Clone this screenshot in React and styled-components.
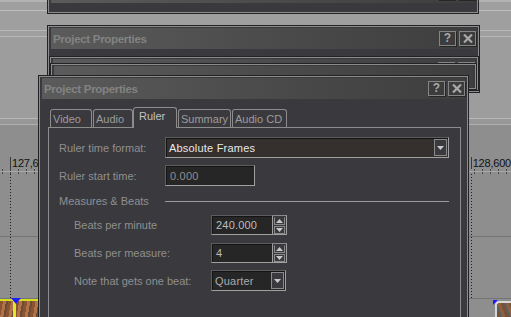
import React from 'react';
import styled, { createGlobalStyle, css } from 'styled-components';

const Global = createGlobalStyle`
  html, body { margin: 0; padding: 0; background: #8e8e8e; overflow: hidden; }
  body { font-family: "Liberation Sans", Arial, sans-serif; }
  * { box-sizing: border-box; }
`;

const Stage = styled.div`
  position: relative;
  width: 511px;
  height: 317px;
  overflow: hidden;
  background: #8e8e8e;
`;

/* ---------- timeline background ---------- */
const Lanes = styled.div`
  display: flex;
  flex-direction: column;
  height: 100%;
`;
const Lane = styled.div`
  flex: 0 0 ${p => p.$h}px;
  background: ${p => p.$bg || 'transparent'};
  border-bottom: ${p => (p.$line ? `1px solid ${p.$line}` : 'none')};
`;
const dots = `repeating-linear-gradient(to bottom, #1c1c1c 0 1px, transparent 1px 3px)`;
const Track = styled(Lane)`
  background-image: ${dots}, ${dots};
  background-size: 1px 100%, 1px 100%;
  background-position: 10px 0, 471px 0;
  background-repeat: no-repeat;
`;
const RulerRow = styled.div`
  flex: 0 0 44px;
  display: flex;
  align-items: flex-end;
  justify-content: space-between;
  padding-left: 10px;
`;
const RulerLabel = styled.div`
  border-left: 1px solid #3a3a3a;
  padding-left: 1px;
  font-size: 11px;
  line-height: 12px;
  color: #111;
  white-space: nowrap;
  letter-spacing: -0.2px;
`;
const Ticks = styled.div`
  flex: 0 0 5px;
  background:
    linear-gradient(#aaaaaa, #aaaaaa) 0 2px / 100% 1px no-repeat,
    repeating-linear-gradient(90deg, #4a4a4a 0 1px, transparent 1px 8px);
  background-position: 0 2px, 2px 0;
`;
const ClipRow = styled.div`
  flex: 1;
  display: flex;
  justify-content: space-between;
`;
const ClipLeft = styled.div`
  position: relative;
  width: 40px;
  border-top: 2px solid #d6df1e;
  background:
    linear-gradient(90deg, transparent 13px, #e3e82a 13px 15px, #cfcfcf 15px 16px, transparent 16px),
    repeating-linear-gradient(100deg, #8a5432 0 3px, #b07448 3px 6px, #6d4a34 6px 8px);
`;
const ClipRight = styled.div`
  position: relative;
  width: 16px;
  margin-top: 2px;
  border-top: 2px solid #d8d8d8;
  border-left: 2px solid #d8d8d8;
  border-top-left-radius: 4px;
  background: repeating-linear-gradient(70deg, #7a5036 0 3px, #5a6060 3px 5px, #8c6040 5px 8px);
`;
const Marker = styled.svg`
  position: absolute;
  top: -3px;
  left: ${p => p.$x}px;
`;

/* ---------- windows ---------- */
const Win = styled.div`
  position: absolute;
  left: ${p => p.$x}px;
  top: ${p => p.$y}px;
  width: ${p => p.$w}px;
  height: ${p => p.$h}px;
  z-index: ${p => p.$z};
  background: #3a393e;
  border: 1px solid #222225;
  box-shadow: inset 0 0 0 1px #8c8c8c;
  padding: 2px 3px 0 3px;
  display: flex;
  flex-direction: column;
  overflow: hidden;
`;
const TitleBar = styled.div`
  flex: 0 0 21px;
  display: flex;
  align-items: center;
  justify-content: space-between;
  padding: 0 0 0 2px;
  background: linear-gradient(90deg, #5b5b5b 0%, #4a4a4a 55%, #3e3e3e 100%);
`;
const Title = styled.div`
  font-weight: bold;
  font-size: 11.5px;
  letter-spacing: -0.3px;
  color: #838383;
  white-space: nowrap;
  visibility: ${p => (p.$hidden ? 'hidden' : 'visible')};
`;
const Btns = styled.div`
  display: flex;
  gap: 3px;
  visibility: ${p => (p.$hidden ? 'hidden' : 'visible')};
`;
const TBtn = styled.div`
  width: 17px;
  height: 15px;
  border: 1px solid #858585;
  box-shadow: 1px 1px 0 #262626;
  background: #3c3c3c;
  color: #a8a8a8;
  font-weight: bold;
  font-size: 12px;
  line-height: 13px;
  display: flex;
  align-items: center;
  justify-content: center;
`;

const Body = styled.div`
  flex: 1;
  display: flex;
  flex-direction: column;
  padding: 8px 4px 0 6px;
`;
const TabRow = styled.div`
  display: flex;
  align-items: flex-end;
  padding-left: 2px;
  height: 20px;
`;
const Tab = styled.div`
  width: ${p => p.$w}px;
  margin-left: ${p => p.$ml || 0}px;
  height: 18px;
  border: 1px solid #8c8c8c;
  border-bottom: none;
  border-radius: 3px 3px 0 0;
  padding-left: 2px;
  font-size: 11px;
  line-height: 18px;
  color: #9c9c9c;
  white-space: nowrap;
  ${p => p.$active && css`
    position: relative;
    z-index: 1;
    height: 21px;
    margin-bottom: -1px;
    padding-left: 5px;
    line-height: 17px;
    background: #3a393e;
    color: #c2c2c2;
  `}
`;
const Panel = styled.div`
  flex: 1;
  border: 1px solid #8c8c8c;
  border-bottom: none;
  padding: 9px 0 0 10px;
  display: flex;
  flex-direction: column;
`;
const Row = styled.div`
  display: flex;
  align-items: center;
  height: ${p => p.$h}px;
  margin-top: ${p => p.$mt}px;
  padding-left: ${p => p.$indent || 0}px;
`;
const Label = styled.div`
  width: ${p => p.$w}px;
  flex: none;
  font-size: 11px;
  color: #8f8f8f;
  white-space: nowrap;
`;
const Rule = styled.div`
  flex: 1;
  height: 1px;
  background: #9a9a9a;
  margin-right: 11px;
`;
const Sunken = styled.div`
  width: ${p => p.$w}px;
  height: 100%;
  display: flex;
  align-items: stretch;
  border: 1px solid;
  border-color: #5c5c5c #a0a0a0 #a0a0a0 #5c5c5c;
  box-shadow: inset 1px 1px 0 #141414;
  background: ${p => p.$bg || '#262626'};
  padding: 1px;
`;
const Value = styled.div`
  flex: 1;
  display: flex;
  align-items: center;
  padding-left: ${p => p.$pl || 3}px;
  font-size: 11px;
  color: ${p => p.$c || '#bdbdbd'};
  white-space: nowrap;
  letter-spacing: 0.2px;
`;
const DropBtn = styled.div`
  width: 13px;
  border: 1px solid #8a8a8a;
  background: #3a393e;
  display: flex;
  align-items: center;
  justify-content: center;
`;
const SpinWrap = styled.div`
  display: flex;
  height: 100%;
`;
const SpinCol = styled.div`
  width: 14px;
  display: flex;
  flex-direction: column;
  gap: 1px;
  border-right: 1px solid #a0a0a0;
  border-bottom: 1px solid #a0a0a0;
  border-top: 1px solid #8a8a8a;
  padding: 1px 1px 0 1px;
`;
const SpinBtn = styled.div`
  flex: 1;
  border: 1px solid #8a8a8a;
  border-top-color: ${p => (p.$down ? '#8a8a8a' : '#3a393e')};
  background: #3a393e;
  display: flex;
  align-items: center;
  justify-content: center;
`;

const Down = ({ c = '#c8c8c8' }) => (
  <svg width="7" height="4" viewBox="0 0 7 4"><path d="M0 0h7L3.5 4z" fill={c} /></svg>
);
const Up = ({ c = '#c8c8c8' }) => (
  <svg width="7" height="4" viewBox="0 0 7 4"><path d="M0 4h7L3.5 0z" fill={c} /></svg>
);
const CloseIcon = () => (
  <svg width="10" height="9" viewBox="0 0 10 9">
    <path d="M1 0.5l8 8M9 0.5l-8 8" stroke="#a8a8a8" strokeWidth="2.2" />
  </svg>
);

const WindowFrame = ({ x, y, w, h, z, noTitle, noButtons, children }) => (
  <Win $x={x} $y={y} $w={w} $h={h} $z={z}>
    <TitleBar>
      <Title $hidden={noTitle}>Project Properties</Title>
      <Btns $hidden={noButtons}>
        <TBtn>?</TBtn>
        <TBtn><CloseIcon /></TBtn>
      </Btns>
    </TitleBar>
    {children}
  </Win>
);

const tabs = [
  { t: 'Video', w: 42 },
  { t: 'Audio', w: 40, ml: 1 },
  { t: 'Ruler', w: 44, active: true },
  { t: 'Summary', w: 53, ml: 1 },
  { t: 'Audio CD', w: 55, ml: 1 },
];

export default function App() {
  return (
    <>
      <Global />
      <Stage>
        <Lanes>
          <Lane $h={2} $bg="#b2b2b2" />
          <Lane $h={9} $bg="#9f9f9f" $line="#bcbcbc" />
          <Lane $h={20} $bg="#9f9f9f" $line="#b8b8b8" />
          <Lane $h={6} $bg="#9f9f9f" $line="#b8b8b8" />
          <Lane $h={82} $bg="#9d9d9d" $line="#b8b8b8" />
          <Lane $h={6} $bg="#979797" $line="#b0b0b0" />
          <RulerRow>
            <RulerLabel>127,600</RulerLabel>
            <RulerLabel>128,600</RulerLabel>
          </RulerRow>
          <Ticks />
          <Track $h={63} $line="#747474" />
          <Track $h={62} $line="#747474" />
          <ClipRow>
            <ClipLeft>
              <Marker $x={11} width="10" height="6" viewBox="0 0 10 6"><path d="M0 0h10L5 6z" fill="#1a1aff" /></Marker>
            </ClipLeft>
            <ClipRight>
              <Marker $x={-4} width="5" height="5" viewBox="0 0 5 5"><path d="M0 0h5L0 5z" fill="#1a1aff" /></Marker>
            </ClipRight>
          </ClipRow>
        </Lanes>

        <WindowFrame x={47} y={-21} w={432} h={35} z={1} />
        <WindowFrame x={47} y={25} w={433} h={68} z={2} />
        <WindowFrame x={49} y={56} w={430} h={35} z={3} noTitle />
        <WindowFrame x={50} y={63} w={427} h={27} z={4} noTitle noButtons />

        <WindowFrame x={38} y={75} w={431} h={260} z={5}>
          <Body>
            <TabRow>
              {tabs.map(t => (
                <Tab key={t.t} $w={t.w} $ml={t.ml} $active={t.active}>{t.t}</Tab>
              ))}
            </TabRow>
            <Panel>
              <Row $h={21} $mt={0}>
                <Label $w={106}>Ruler time format:</Label>
                <Sunken $w={284} $bg="#352f2d">
                  <Value $c="#e8e8e8" $pl={2}>Absolute Frames</Value>
                  <DropBtn><Down /></DropBtn>
                </Sunken>
              </Row>
              <Row $h={21} $mt={7}>
                <Label $w={106}>Ruler start time:</Label>
                <Sunken $w={90}>
                  <Value $c="#8e8e8e" $pl={3}>0.000</Value>
                </Sunken>
              </Row>
              <Row $h={14} $mt={8}>
                <Label $w={106}>Measures &amp; Beats</Label>
                <Rule />
              </Row>
              <Row $h={20} $mt={7} $indent={15}>
                <Label $w={137}>Beats per minute</Label>
                <SpinWrap>
                  <Sunken $w={62}><Value>240.000</Value></Sunken>
                  <SpinCol>
                    <SpinBtn><Up /></SpinBtn>
                    <SpinBtn $down><Down /></SpinBtn>
                  </SpinCol>
                </SpinWrap>
              </Row>
              <Row $h={20} $mt={8} $indent={15}>
                <Label $w={137}>Beats per measure:</Label>
                <SpinWrap>
                  <Sunken $w={62}><Value>4</Value></Sunken>
                  <SpinCol>
                    <SpinBtn><Up /></SpinBtn>
                    <SpinBtn $down><Down /></SpinBtn>
                  </SpinCol>
                </SpinWrap>
              </Row>
              <Row $h={21} $mt={7} $indent={15}>
                <Label $w={137}>Note that gets one beat:</Label>
                <Sunken $w={75}>
                  <Value $c="#ababab" $pl={2}>Quarter</Value>
                  <DropBtn><Down /></DropBtn>
                </Sunken>
              </Row>
            </Panel>
          </Body>
        </WindowFrame>
      </Stage>
    </>
  );
}
